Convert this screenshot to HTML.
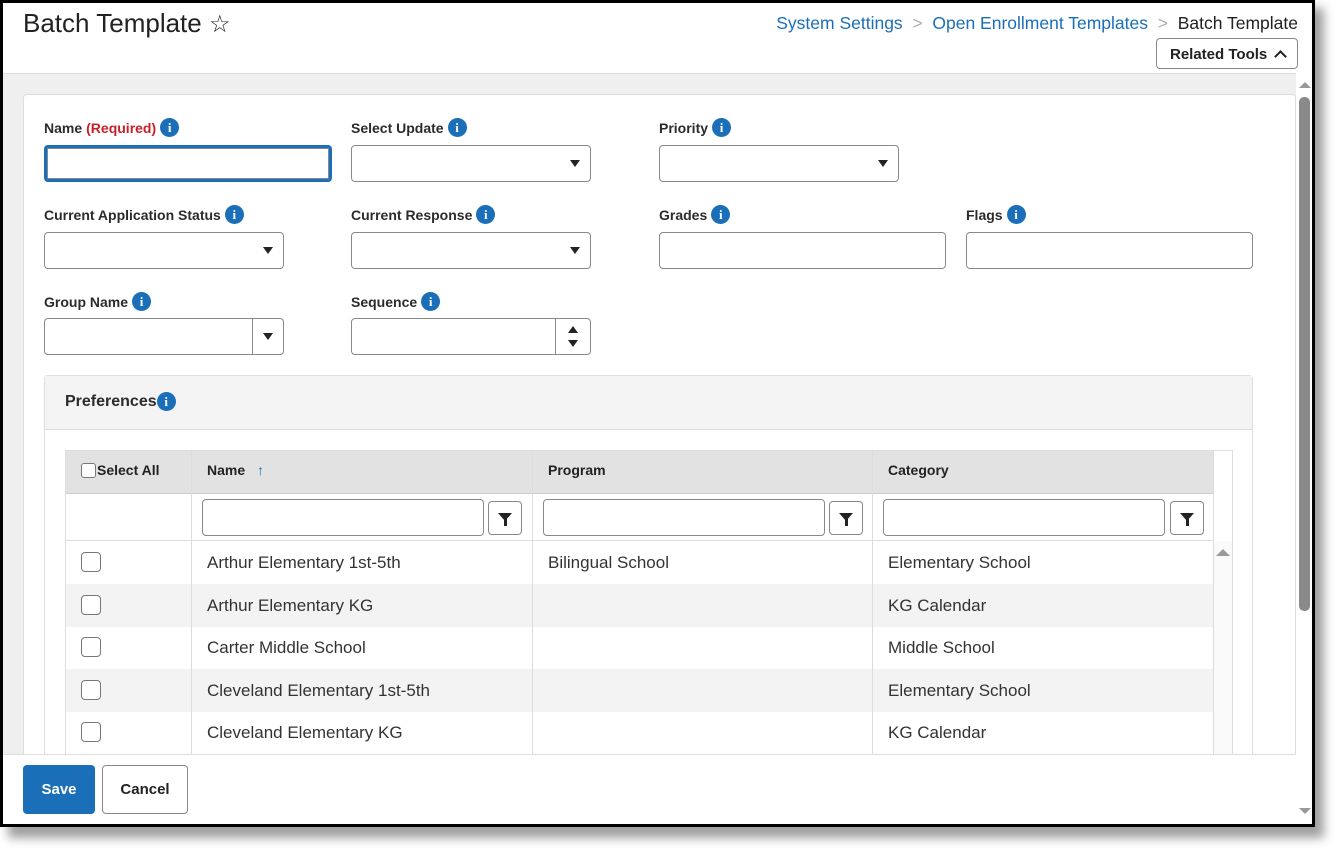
<!DOCTYPE html>
<html><head><meta charset="utf-8"><style>
*{box-sizing:border-box;margin:0;padding:0}
body{width:1341px;height:851px;background:#fff;font-family:"Liberation Sans",sans-serif;color:#222;position:relative;overflow:hidden}
.shadow{position:absolute;left:8px;top:8px;width:1316px;height:830px;background:#888;filter:blur(5px);opacity:.8}
.win{position:absolute;left:0;top:0;width:1315px;height:827px;border:3px solid #000;background:#fff;overflow:hidden}
.abs{position:absolute}
.lbl{position:absolute;font-size:14px;font-weight:bold;color:#2b2b2b;display:flex;align-items:center;gap:4px}
.i{display:inline-block;width:19px;height:19px;border-radius:50%;background:#1a6fb8;color:#fff;font:bold 13px "Liberation Serif",serif;text-align:center;line-height:19px}
.inp{position:absolute;height:37px;border:1px solid #888;border-radius:4px;background:#fff}
.sel::after{content:"";position:absolute;right:10px;top:14px;border-left:5px solid transparent;border-right:5px solid transparent;border-top:7px solid #222}
.cb{position:absolute;width:20px;height:20px;border:1px solid #777;border-radius:4px;background:#fff}
.row{position:absolute;left:0;width:1148px;height:43px;font-size:17px;color:#333}
.row span{position:absolute;top:12px}
.fbtn{position:absolute;width:34px;height:34px;border:1px solid #888;border-radius:4px;background:#fff}
.fbtn::after{content:"";position:absolute;left:9px;top:11px;border-left:7px solid transparent;border-right:7px solid transparent;border-top:8px solid #222}
.fbtn::before{content:"";position:absolute;left:15px;top:17px;width:3px;height:7px;background:#222}
</style></head><body>
<div class="shadow"></div>
<div class="win">
<div class="abs" style="left:20px;top:5px;font-size:26px;color:#222">Batch Template <span style="font-size:24px">☆</span></div>
<div class="abs" style="right:14px;top:10px;font-size:17.5px;color:#1a6fb8;white-space:nowrap">System Settings <span style="color:#aaa">&nbsp;&gt;&nbsp;</span> Open Enrollment Templates <span style="color:#aaa">&nbsp;&gt;&nbsp;</span> <span style="color:#222">Batch Template</span></div>
<div class="abs" style="left:1153px;top:35px;width:142px;height:31px;border:1px solid #888;border-radius:4px;font-size:15px;font-weight:bold;color:#222;padding:7px 0 0 13px">Related Tools &nbsp;<span style="display:inline-block;width:9px;height:9px;border-left:2px solid #222;border-top:2px solid #222;transform:rotate(45deg);position:relative;top:2px"></span></div>
<div class="abs" style="left:0;top:70px;width:1293px;height:684px;background:#efefef;border-top:1px solid #ddd"></div>
<div class="abs" style="left:20px;top:91px;width:1273px;height:700px;background:#fff;border:1px solid #ddd;border-radius:4px"></div>
<div class="abs" style="left:1293px;top:70px;width:16px;height:754px;background:#fff"></div>
<div class="abs" style="left:1296px;top:94px;width:11px;height:514px;background:#8a8a8a;border-radius:5px"></div>
<div class="abs" style="left:1296px;top:79px;border-left:6px solid transparent;border-right:6px solid transparent;border-bottom:6px solid #999"></div>
<div class="abs" style="left:1296px;top:805px;border-left:6px solid transparent;border-right:6px solid transparent;border-top:6px solid #999"></div>

<div class="lbl" style="left:41px;top:115px">Name <span style="color:#c8202a">(Required)</span><span class="i">i</span></div>
<div class="inp" style="left:41px;top:142px;width:288px;border:3px solid #1a6fb8;box-shadow:inset 0 0 0 1px #888"></div>
<div class="lbl" style="left:348px;top:115px">Select Update<span class="i">i</span></div>
<div class="inp sel" style="left:348px;top:142px;width:240px"></div>
<div class="lbl" style="left:656px;top:115px">Priority<span class="i">i</span></div>
<div class="inp sel" style="left:656px;top:142px;width:240px"></div>

<div class="lbl" style="left:41px;top:202px">Current Application Status<span class="i">i</span></div>
<div class="inp sel" style="left:41px;top:229px;width:240px"></div>
<div class="lbl" style="left:348px;top:202px">Current Response<span class="i">i</span></div>
<div class="inp sel" style="left:348px;top:229px;width:240px"></div>
<div class="lbl" style="left:656px;top:202px">Grades<span class="i">i</span></div>
<div class="inp" style="left:656px;top:229px;width:287px"></div>
<div class="lbl" style="left:963px;top:202px">Flags<span class="i">i</span></div>
<div class="inp" style="left:963px;top:229px;width:287px"></div>

<div class="lbl" style="left:41px;top:289px">Group Name<span class="i">i</span></div>
<div class="inp sel" style="left:41px;top:315px;width:240px"><div class="abs" style="left:207px;top:0;width:1px;height:35px;background:#888"></div></div>
<div class="lbl" style="left:348px;top:289px">Sequence<span class="i">i</span></div>
<div class="inp" style="left:348px;top:315px;width:240px"><div class="abs" style="left:203px;top:0;width:1px;height:35px;background:#888"></div>
<div class="abs" style="left:216px;top:7px;border-left:5px solid transparent;border-right:5px solid transparent;border-bottom:7px solid #222"></div>
<div class="abs" style="left:216px;top:21px;border-left:5px solid transparent;border-right:5px solid transparent;border-top:7px solid #222"></div></div>

<div class="abs" style="left:41px;top:372px;width:1209px;height:420px;border:1px solid #ddd;border-radius:4px;background:#fff">
 <div class="abs" style="left:0;top:0;width:1207px;height:54px;background:#f4f4f4;border-bottom:1px solid #ddd"></div>
 <div class="lbl" style="left:20px;top:16px;font-size:16px;gap:0">Preferences<span class="i">i</span></div>
 <div class="abs" style="left:20px;top:74px;width:1168px;height:320px;border:1px solid #ddd;overflow:hidden">
  <div class="abs" style="left:0;top:0;width:1148px;height:43px;background:#e2e2e2;border-bottom:1px solid #ccc"></div>
  <div class="abs" style="left:15px;top:12px;width:15px;height:15px;border:1px solid #777;border-radius:3px;background:#fff"></div>
  <div class="abs" style="left:31px;top:11px;font-size:14px;font-weight:bold">Select All</div>
  <div class="abs" style="left:141px;top:11px;font-size:14px;font-weight:bold">Name <span style="color:#1a6fb8;margin-left:8px">↑</span></div>
  <div class="abs" style="left:482px;top:11px;font-size:14px;font-weight:bold">Program</div>
  <div class="abs" style="left:822px;top:11px;font-size:14px;font-weight:bold">Category</div>
  <div class="abs" style="left:0;top:43px;width:1148px;height:47px;border-bottom:1px solid #ddd"></div>
  <div class="inp" style="left:136px;top:48px;width:282px;height:37px"></div><div class="fbtn" style="left:422px;top:50px"></div>
  <div class="inp" style="left:477px;top:48px;width:282px;height:37px"></div><div class="fbtn" style="left:763px;top:50px"></div>
  <div class="inp" style="left:817px;top:48px;width:282px;height:37px"></div><div class="fbtn" style="left:1104px;top:50px"></div>
  <div class="row" style="top:90px"><div class="cb" style="left:15px;top:11px"></div><span style="left:141px">Arthur Elementary 1st-5th</span><span style="left:482px">Bilingual School</span><span style="left:822px">Elementary School</span></div>
  <div class="row" style="top:133px;background:#f3f3f3"><div class="cb" style="left:15px;top:11px"></div><span style="left:141px">Arthur Elementary KG</span><span style="left:822px">KG Calendar</span></div>
  <div class="row" style="top:175px"><div class="cb" style="left:15px;top:11px"></div><span style="left:141px">Carter Middle School</span><span style="left:822px">Middle School</span></div>
  <div class="row" style="top:218px;background:#f3f3f3"><div class="cb" style="left:15px;top:11px"></div><span style="left:141px">Cleveland Elementary 1st-5th</span><span style="left:822px">Elementary School</span></div>
  <div class="row" style="top:260px"><div class="cb" style="left:15px;top:11px"></div><span style="left:141px">Cleveland Elementary KG</span><span style="left:822px">KG Calendar</span></div>
  <div class="abs" style="left:125px;top:0;width:1px;height:320px;background:#ddd"></div>
  <div class="abs" style="left:466px;top:0;width:1px;height:320px;background:#ddd"></div>
  <div class="abs" style="left:806px;top:0;width:1px;height:320px;background:#ddd"></div>
  <div class="abs" style="left:1147px;top:0;width:1px;height:320px;background:#ddd"></div>
  <div class="abs" style="left:1148px;top:90px;width:19px;height:230px;background:#fafafa"></div>
  <div class="abs" style="left:1150px;top:98px;border-left:7px solid transparent;border-right:7px solid transparent;border-bottom:7px solid #999"></div>
 </div>
</div>

<div class="abs" style="left:0;top:751px;width:1293px;height:73px;background:#fff;border-top:1px solid #ddd"></div>
<div class="abs" style="left:20px;top:762px;width:72px;height:49px;background:#1a6fb8;border-radius:4px;color:#fff;font-size:15px;font-weight:bold;text-align:center;line-height:49px">Save</div>
<div class="abs" style="left:99px;top:762px;width:86px;height:49px;border:1px solid #888;border-radius:4px;color:#222;font-size:15px;font-weight:bold;text-align:center;line-height:47px">Cancel</div>
</div>
</body></html>
